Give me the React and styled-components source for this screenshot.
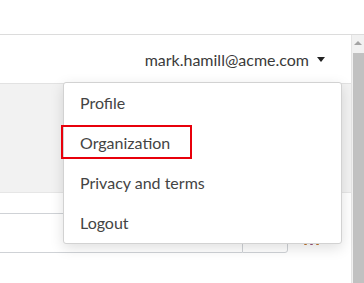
import React from "react";
import styled, { createGlobalStyle } from "styled-components";

const GlobalStyle = createGlobalStyle`
  html, body {
    margin: 0;
    padding: 0;
    width: 364px;
    height: 283px;
    overflow: hidden;
    background: #ffffff;
  }
  body {
    font-family: Lato, "Noto Sans", Arial, sans-serif;
    color: #333333;
  }
`;

const Page = styled.div`
  width: 364px;
  height: 283px;
  display: flex;
  flex-direction: column;
`;

const TopBar = styled.div`
  height: 34px;
  border-bottom: 1px solid #dcdcdc;
  background: #ffffff;
`;

const Body = styled.div`
  flex: 1;
  display: flex;
  min-height: 0;
`;

const Content = styled.div`
  flex: 1;
  display: flex;
  flex-direction: column;
  background: #f4f4f4;
  border-right: 1px solid #e4e4e4;
`;

const Header = styled.div`
  height: 48px;
  display: flex;
  justify-content: flex-end;
  align-items: center;
  padding-right: 26px;
  background: #ffffff;
  border-bottom: 1px solid #e2e2e2;
`;

const UserMenu = styled.div`
  position: relative;
  display: flex;
  align-items: center;
  gap: 8px;
  font-size: 16px;
  color: #3a3a3a;
`;

const Caret = styled.span`
  width: 0;
  height: 0;
  border-left: 4px solid transparent;
  border-right: 4px solid transparent;
  border-top: 5px solid #222222;
  margin-top: 1px;
`;

const Dropdown = styled.div`
  position: absolute;
  top: 32px;
  right: -17px;
  width: 277px;
  background: #ffffff;
  border: 1px solid #d2d2d2;
  border-radius: 3px;
  box-shadow: 0 4px 14px rgba(0, 0, 0, 0.13);
  display: flex;
  flex-direction: column;
  z-index: 10;
`;

const MenuItem = styled.div`
  position: relative;
  height: 40px;
  display: flex;
  align-items: center;
  padding-left: 16px;
  font-size: 16px;
  color: #444444;
`;

const Highlight = styled.span`
  position: absolute;
  left: -3px;
  top: 2px;
  width: 131px;
  height: 34px;
  border: 2px solid #e8000b;
  box-sizing: border-box;
`;

const Band = styled.div`
  height: 108px;
  background: #f2f2f2;
  border-bottom: 1px solid #e6e6e6;
`;

const Card = styled.div`
  flex: 1;
  background: #ffffff;
  padding-top: 20px;
  display: flex;
  align-items: flex-start;
`;

const Input = styled.div`
  width: 242px;
  height: 38px;
  border-top: 1px solid #cfd2d6;
  border-bottom: 1px solid #cfd2d6;
`;

const SideButton = styled.div`
  width: 44px;
  height: 38px;
  border: 1px solid #cfd2d6;
  border-radius: 0 3px 3px 0;
`;

const Dots = styled.div`
  display: flex;
  gap: 3px;
  margin-left: 16px;
  margin-top: 28px;
`;

const Dot = styled.span`
  width: 3px;
  height: 4px;
  border-radius: 1px;
  background: ${(p) => p.$color};
`;

const Scrollbar = styled.div`
  width: 12px;
  background: #f1f1f1;
  display: flex;
  flex-direction: column;
  align-items: flex-end;
`;

const ArrowUp = styled.span`
  width: 0;
  height: 0;
  margin: 6px 2px 8px 0;
  border-left: 4px solid transparent;
  border-right: 4px solid transparent;
  border-bottom: 4px solid #a3a3a3;
`;

const Thumb = styled.div`
  flex: 1;
  width: 11px;
  background: #c1c1c1;
`;

const items = ["Profile", "Organization", "Privacy and terms", "Logout"];

export default function App() {
  return (
    <>
      <GlobalStyle />
      <Page>
        <TopBar />
        <Body>
          <Content>
            <Header>
              <UserMenu>
                mark.hamill@acme.com
                <Caret />
                <Dropdown>
                  {items.map((label) => (
                    <MenuItem key={label}>
                      {label === "Organization" && <Highlight />}
                      {label}
                    </MenuItem>
                  ))}
                </Dropdown>
              </UserMenu>
            </Header>
            <Band />
            <Card>
              <Input />
              <SideButton />
              <Dots>
                <Dot $color="#c0762e" />
                <Dot $color="#9a4f7a" />
                <Dot $color="#c0762e" />
              </Dots>
            </Card>
          </Content>
          <Scrollbar>
            <ArrowUp />
            <Thumb />
          </Scrollbar>
        </Body>
      </Page>
    </>
  );
}
